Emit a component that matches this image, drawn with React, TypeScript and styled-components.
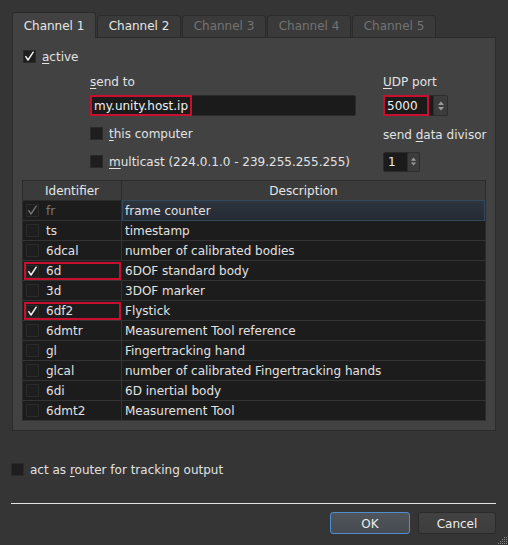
import React from 'react';
import styled, { createGlobalStyle } from 'styled-components';

const GlobalStyle = createGlobalStyle`
  html, body {
    margin: 0;
    padding: 0;
    background: #353535;
  }
  body {
    font-family: "DejaVu Sans", "Noto Sans", sans-serif;
    font-size: 12px;
    color: #e2e2e2;
  }
`;

const Window = styled.div`
  position: relative;
  width: 508px;
  height: 545px;
  box-sizing: border-box;
  padding: 12px 12px 0 11px;
  display: flex;
  flex-direction: column;
  background: #353535;
`;

const TabBar = styled.div`
  position: relative;
  z-index: 1;
  display: flex;
  align-items: flex-end;
  gap: 1px;
  height: 26px;
  margin-left: 1px;
  margin-bottom: -1px;
`;

const Tab = styled.div<{ $active?: boolean; $disabled?: boolean }>`
  width: 84px;
  height: ${p => (p.$active ? 26 : 23)}px;
  box-sizing: border-box;
  border: 1px solid #2b2b2b;
  border-bottom: ${p => (p.$active ? 'none' : '1px solid #2b2b2b')};
  border-radius: 3px 3px 0 0;
  background: ${p => (p.$active ? '#424242' : '#3a3a3a')};
  color: ${p => (p.$disabled ? '#737373' : '#e6e6e6')};
  display: flex;
  align-items: center;
  justify-content: center;
  padding-bottom: ${p => (p.$active ? 0 : 1)}px;
`;

const Pane = styled.div`
  width: 484px;
  height: 394px;
  margin-left: 1px;
  box-sizing: border-box;
  border: 1px solid #2b2b2b;
  background: #424242;
  padding: 12px 9px 0 10px;
  display: flex;
  flex-direction: column;
`;

const CheckRow = styled.label`
  display: flex;
  align-items: center;
  gap: 6px;
  height: 13px;
  white-space: nowrap;
`;

const Box = styled.span<{ $dim?: boolean }>`
  width: 13px;
  height: 13px;
  box-sizing: border-box;
  border: 1px solid #2a2a2a;
  background: #1e1e1e;
  display: inline-flex;
  align-items: center;
  justify-content: center;
  flex: none;
  svg path {
    stroke: ${p => (p.$dim ? '#6e6e6e' : '#f0f0f0')};
  }
`;

const Mn = styled.span`
  text-decoration: underline;
  text-underline-offset: 2px;
`;

const Settings = styled.div`
  display: grid;
  grid-template-columns: 266px 110px;
  grid-template-rows: 32px 21px 35px 21px;
  column-gap: 27px;
  margin-left: 67px;
  align-items: center;
`;

const FieldLabel = styled.div`
  align-self: end;
  padding-bottom: 6px;
  line-height: 14px;
  white-space: nowrap;
`;

const PlainLabel = styled.div`
  white-space: nowrap;
  padding-top: 2px;
`;

const LineEdit = styled.div`
  height: 21px;
  box-sizing: border-box;
  border: 1px solid #2a2a2a;
  border-radius: 2px;
  background: #1b1b1b;
  display: flex;
  align-items: stretch;
  color: #f0f0f0;
`;

const Marked = styled.span`
  display: inline-flex;
  align-items: center;
  box-sizing: border-box;
  margin: -1px 0 -1px -1px;
  padding: 0 2px 0 2px;
  border: 2px solid #c8102e;
`;

const Spin = styled.div<{ $w: number; $h: number }>`
  width: ${p => p.$w}px;
  height: ${p => p.$h}px;
  box-sizing: border-box;
  border: 1px solid #2a2a2a;
  border-radius: 2px;
  background: #1b1b1b;
  display: flex;
  align-items: stretch;
  justify-content: space-between;
  color: #f0f0f0;
`;

const SpinText = styled.span`
  display: flex;
  align-items: center;
  padding-left: 4px;
`;

const SpinButtons = styled.span<{ $w: number }>`
  width: ${p => p.$w}px;
  box-sizing: border-box;
  border: 1px solid #2e2e2e;
  border-radius: 2px;
  background: #3c3c3c;
  display: flex;
  align-items: center;
  justify-content: center;
  margin: -1px -1px -1px 0;
`;

const Table = styled.div`
  margin: 8px 0 0 -1px;
  width: 464px;
  height: 241px;
  box-sizing: border-box;
  border: 1px solid #2b2b2b;
  background: #1c1c1c;
  display: flex;
  flex-direction: column;
`;

const Row = styled.div<{ $header?: boolean }>`
  display: grid;
  grid-template-columns: 99px 1fr;
  height: 20px;
  box-sizing: border-box;
  border-bottom: 1px solid ${p => (p.$header ? '#2b2b2b' : '#333333')};
  background: ${p => (p.$header ? '#3b3b3b' : 'transparent')};
  flex: none;
`;

const HeadCell = styled.div`
  display: flex;
  align-items: center;
  justify-content: center;
  border-right: 1px solid #2b2b2b;
  color: #e6e6e6;
  &:last-child {
    border-right: none;
  }
`;

const IdCell = styled.div<{ $marked?: boolean; $dim?: boolean }>`
  display: flex;
  align-items: center;
  gap: 7px;
  border-right: 1px solid #333333;
  color: ${p => (p.$dim ? '#7a7a7a' : '#e2e2e2')};
  outline: ${p => (p.$marked ? '2px solid #c8102e' : 'none')};
  outline-offset: -2px;
  margin: ${p => (p.$marked ? '1px 1px 0 1px' : '0')};
  padding-left: ${p => (p.$marked ? 2 : 3)}px;
`;

const DescCell = styled.div<{ $current?: boolean }>`
  display: flex;
  align-items: center;
  padding-left: 3px;
  box-sizing: border-box;
  color: #e2e2e2;
  ${p =>
    p.$current &&
    `
    background: linear-gradient(#2c343e, #252b33);
    border: 1px solid #34485e;
    margin: -1px 0 -1px 0;
    padding-left: 2px;
  `}
`;

const Bottom = styled.div`
  margin-top: 32px;
`;

const Separator = styled.div`
  margin-top: 27px;
  height: 1px;
  background: #e4e4e4;
`;

const ButtonRow = styled.div`
  margin-top: 8px;
  display: flex;
  justify-content: flex-end;
  gap: 8px;
`;

const Button = styled.div<{ $default?: boolean }>`
  width: ${p => (p.$default ? 80 : 78)}px;
  height: 22px;
  box-sizing: border-box;
  border-radius: 3px;
  border: 1px solid ${p => (p.$default ? '#4f8fd0' : '#2b2b2b')};
  background: ${p => (p.$default ? 'linear-gradient(#50545b, #464a51)' : 'linear-gradient(#424242, #3d3d3d)')};
  color: #ececec;
  display: flex;
  align-items: center;
  justify-content: center;
  padding-top: 1px;
`;

const Grip = styled.svg`
  position: absolute;
  right: 0;
  bottom: 0;
`;

const Check = ({ on, dim }: { on?: boolean; dim?: boolean }) => (
  <Box $dim={dim}>
    {on && (
      <svg width="11" height="11" viewBox="0 0 11 11">
        <path d="M1.8 5.6 L4 9 L9.2 1.2" fill="none" strokeWidth="1.5" strokeLinecap="round" strokeLinejoin="round" />
      </svg>
    )}
  </Box>
);

const Arrows = ({ size }: { size: number }) => (
  <svg width={size} height={size + 4} viewBox="0 0 8 12">
    <path d="M1 5 L4 1.5 L7 5 Z" fill="#9a9a9a" />
    <path d="M1 7 L4 10.5 L7 7 Z" fill="#9a9a9a" />
  </svg>
);

const items = [
  { id: 'fr', desc: 'frame counter', on: true, dim: true, current: true },
  { id: 'ts', desc: 'timestamp' },
  { id: '6dcal', desc: 'number of calibrated bodies' },
  { id: '6d', desc: '6DOF standard body', on: true, marked: true },
  { id: '3d', desc: '3DOF marker' },
  { id: '6df2', desc: 'Flystick', on: true, marked: true },
  { id: '6dmtr', desc: 'Measurement Tool reference' },
  { id: 'gl', desc: 'Fingertracking hand' },
  { id: 'glcal', desc: 'number of calibrated Fingertracking hands' },
  { id: '6di', desc: '6D inertial body' },
  { id: '6dmt2', desc: 'Measurement Tool' },
];

export default function App() {
  return (
    <>
      <GlobalStyle />
      <Window>
        <TabBar>
          <Tab $active>Channel 1</Tab>
          <Tab>Channel 2</Tab>
          <Tab $disabled>Channel 3</Tab>
          <Tab $disabled>Channel 4</Tab>
          <Tab $disabled>Channel 5</Tab>
        </TabBar>
        <Pane>
          <CheckRow>
            <Check on />
            <span>
              <Mn>a</Mn>ctive
            </span>
          </CheckRow>
          <Settings>
            <FieldLabel>
              <Mn>s</Mn>end to
            </FieldLabel>
            <FieldLabel>
              <Mn>U</Mn>DP port
            </FieldLabel>
            <LineEdit>
              <Marked>my.unity.host.ip</Marked>
            </LineEdit>
            <Spin $w={65} $h={21}>
              <Marked>5000&nbsp;&nbsp;</Marked>
              <SpinButtons $w={15}>
                <Arrows size={8} />
              </SpinButtons>
            </Spin>
            <CheckRow>
              <Check />
              <span>
                <Mn>t</Mn>his computer
              </span>
            </CheckRow>
            <PlainLabel>
              send <Mn>d</Mn>ata divisor
            </PlainLabel>
            <CheckRow>
              <Check />
              <span>
                <Mn>m</Mn>ulticast (224.0.1.0 - 239.255.255.255)
              </span>
            </CheckRow>
            <Spin $w={37} $h={20}>
              <SpinText>1</SpinText>
              <SpinButtons $w={13}>
                <Arrows size={7} />
              </SpinButtons>
            </Spin>
          </Settings>
          <Table>
            <Row $header>
              <HeadCell>Identifier</HeadCell>
              <HeadCell>Description</HeadCell>
            </Row>
            {items.map(it => (
              <Row key={it.id}>
                <IdCell $marked={it.marked} $dim={it.dim}>
                  <Check on={it.on} dim={it.dim} />
                  <span>{it.id}</span>
                </IdCell>
                <DescCell $current={it.current}>{it.desc}</DescCell>
              </Row>
            ))}
          </Table>
        </Pane>
        <Bottom>
          <CheckRow>
            <Check />
            <span>
              act as <Mn>r</Mn>outer for tracking output
            </span>
          </CheckRow>
        </Bottom>
        <Separator />
        <ButtonRow>
          <Button $default>OK</Button>
          <Button>Cancel</Button>
        </ButtonRow>
        <Grip width="11" height="9" viewBox="0 0 11 9">
          {[
            [9, 7], [7, 7], [5, 7], [3, 7], [1, 7],
            [9, 5], [7, 5], [5, 5], [3, 5],
            [9, 3], [7, 3], [5, 3],
            [9, 1], [7, 1],
          ].map(([x, y]) => (
            <rect key={`${x}-${y}`} x={x} y={y} width="1" height="1" fill="#8a8a8a" />
          ))}
        </Grip>
      </Window>
    </>
  );
}
